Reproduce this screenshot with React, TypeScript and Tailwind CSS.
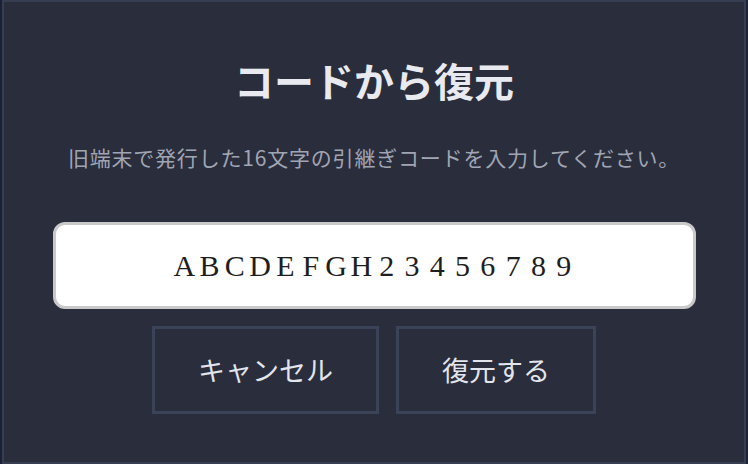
import React from "react";

const CODE = "ABCDEFGH23456789";

export default function App() {
  return (
    <div className="w-[748px] h-[464px] overflow-hidden bg-[#1b2135] px-[2px]">
      <div
        className="w-[744px] h-[464px] border-2 border-[#373e52] bg-[#2a2d3b] flex flex-col items-center"
        style={{ fontFamily: '"Noto Sans CJK JP", "Noto Sans", sans-serif' }}
      >
        <h1 className="mt-[54px] text-[40px] leading-[48px] font-bold text-[#e8eaf0]">
          コードから復元
        </h1>
        <p className="mt-[39px] text-[21px] leading-[28px] text-[#a0a5b3] tracking-[0.8px]">
          旧端末で発行した16文字の引継ぎコードを入力してください。
        </p>
        <div className="mt-[51px] w-[643px] h-[87px] rounded-[12px] border-[3px] border-[#c9c9c9] bg-white flex items-center justify-center">
          <div
            className="flex text-[30px] leading-[36px] text-[#1e1e1e]"
            style={{ fontFamily: '"Liberation Serif", "DejaVu Serif", serif' }}
          >
            {CODE.split("").map((c, i) => (
              <span key={i} className="inline-block w-[25.3px] text-center">
                {c}
              </span>
            ))}
          </div>
        </div>
        <div className="mt-[17px] flex gap-[17px]">
          <button className="h-[88px] w-[227px] border-[3px] border-[#3a4358] bg-[#2a2d3b] text-[27px] text-[#e2e5ec]">
            キャンセル
          </button>
          <button className="h-[88px] w-[200px] border-[3px] border-[#3a4358] bg-[#2a2d3b] text-[27px] text-[#e2e5ec]">
            復元する
          </button>
        </div>
      </div>
    </div>
  );
}
